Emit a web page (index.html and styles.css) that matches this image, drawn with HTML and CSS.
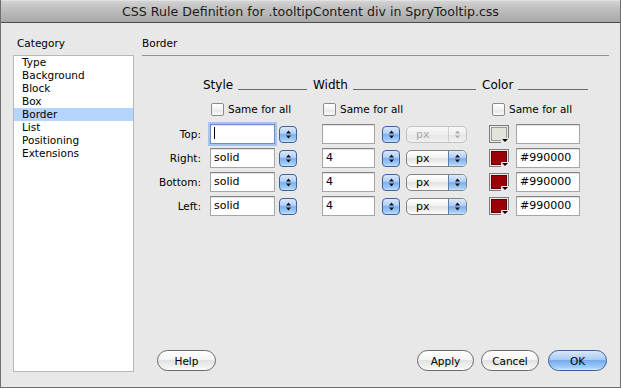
FILE: index.html
```html
<!DOCTYPE html>
<html lang="en">
<head>
  <meta charset="UTF-8">
  <title>CSS Rule Definition</title>
  <link rel="stylesheet" href="styles.css">
</head>
<body>
  <div class="window">
    <div class="titlebar">CSS Rule Definition for .tooltipContent div in SpryTooltip.css</div>

    <div class="content">
      <!-- Category list -->
      <div class="sidebar">
        <div class="side-title">Category</div>
        <ul class="category-list">
          <li>Type</li>
          <li>Background</li>
          <li>Block</li>
          <li>Box</li>
          <li class="selected">Border</li>
          <li>List</li>
          <li>Positioning</li>
          <li>Extensions</li>
        </ul>
      </div>

      <!-- Border panel -->
      <div class="panel">
        <div class="panel-title">Border</div>

        <div class="head-row">
          <div class="group group-style"><span>Style</span><i class="rule"></i></div>
          <div class="group group-width"><span>Width</span><i class="rule"></i></div>
          <div class="group group-color"><span>Color</span><i class="rule"></i></div>
        </div>

        <div class="same-row">
          <label class="same same-style"><span class="checkbox"></span>Same for all</label>
          <label class="same same-width"><span class="checkbox"></span>Same for all</label>
          <label class="same same-color"><span class="checkbox"></span>Same for all</label>
        </div>

        <div class="row">
          <span class="row-label">Top:</span>
          <span class="field field-style focused"><span class="caret"></span></span>
          <span class="stepper stepper-style"><svg width="5" height="9" viewBox="0 0 5 9"><path d="M2.5 0.5L5 3.5H0Z M0 5.5H5L2.5 8.5Z" fill="#111"/></svg></span>
          <span class="field field-width"></span>
          <span class="stepper stepper-width"><svg width="5" height="9" viewBox="0 0 5 9"><path d="M2.5 0.5L5 3.5H0Z M0 5.5H5L2.5 8.5Z" fill="#111"/></svg></span>
          <span class="select disabled"><span class="select-text">px</span><span class="select-arrow"><svg width="5" height="9" viewBox="0 0 5 9"><path d="M2.5 0.5L5 3.5H0Z M0 5.5H5L2.5 8.5Z" fill="#a8a8a8"/></svg></span></span>
          <span class="swatch swatch-empty"><span class="swatch-fill"></span><i class="swatch-tri"></i></span>
          <span class="field field-color"></span>
        </div>

        <div class="row">
          <span class="row-label">Right:</span>
          <span class="field field-style">solid</span>
          <span class="stepper stepper-style"><svg width="5" height="9" viewBox="0 0 5 9"><path d="M2.5 0.5L5 3.5H0Z M0 5.5H5L2.5 8.5Z" fill="#111"/></svg></span>
          <span class="field field-width">4</span>
          <span class="stepper stepper-width"><svg width="5" height="9" viewBox="0 0 5 9"><path d="M2.5 0.5L5 3.5H0Z M0 5.5H5L2.5 8.5Z" fill="#111"/></svg></span>
          <span class="select"><span class="select-text">px</span><span class="select-arrow"><svg width="5" height="9" viewBox="0 0 5 9"><path d="M2.5 0.5L5 3.5H0Z M0 5.5H5L2.5 8.5Z" fill="#111"/></svg></span></span>
          <span class="swatch swatch-red"><span class="swatch-fill"></span><i class="swatch-tri"></i></span>
          <span class="field field-color">#990000</span>
        </div>

        <div class="row">
          <span class="row-label">Bottom:</span>
          <span class="field field-style">solid</span>
          <span class="stepper stepper-style"><svg width="5" height="9" viewBox="0 0 5 9"><path d="M2.5 0.5L5 3.5H0Z M0 5.5H5L2.5 8.5Z" fill="#111"/></svg></span>
          <span class="field field-width">4</span>
          <span class="stepper stepper-width"><svg width="5" height="9" viewBox="0 0 5 9"><path d="M2.5 0.5L5 3.5H0Z M0 5.5H5L2.5 8.5Z" fill="#111"/></svg></span>
          <span class="select"><span class="select-text">px</span><span class="select-arrow"><svg width="5" height="9" viewBox="0 0 5 9"><path d="M2.5 0.5L5 3.5H0Z M0 5.5H5L2.5 8.5Z" fill="#111"/></svg></span></span>
          <span class="swatch swatch-red"><span class="swatch-fill"></span><i class="swatch-tri"></i></span>
          <span class="field field-color">#990000</span>
        </div>

        <div class="row">
          <span class="row-label">Left:</span>
          <span class="field field-style">solid</span>
          <span class="stepper stepper-style"><svg width="5" height="9" viewBox="0 0 5 9"><path d="M2.5 0.5L5 3.5H0Z M0 5.5H5L2.5 8.5Z" fill="#111"/></svg></span>
          <span class="field field-width">4</span>
          <span class="stepper stepper-width"><svg width="5" height="9" viewBox="0 0 5 9"><path d="M2.5 0.5L5 3.5H0Z M0 5.5H5L2.5 8.5Z" fill="#111"/></svg></span>
          <span class="select"><span class="select-text">px</span><span class="select-arrow"><svg width="5" height="9" viewBox="0 0 5 9"><path d="M2.5 0.5L5 3.5H0Z M0 5.5H5L2.5 8.5Z" fill="#111"/></svg></span></span>
          <span class="swatch swatch-red"><span class="swatch-fill"></span><i class="swatch-tri"></i></span>
          <span class="field field-color">#990000</span>
        </div>

        <!-- Dialog buttons -->
        <div class="footer">
          <button class="btn btn-help">Help</button>
          <span class="spacer"></span>
          <button class="btn btn-apply">Apply</button>
          <button class="btn btn-cancel">Cancel</button>
          <button class="btn btn-ok">OK</button>
        </div>
      </div>
    </div>
  </div>
</body>
</html>
```

FILE: styles.css
```css
body {
  margin: 0;
  font-family: "DejaVu Sans", sans-serif;
  font-size: 10.5px;
  color: #000;
  background: #e8e8e8;
}

.window {
  width: 621px;
  height: 388px;
  box-sizing: border-box;
  border: 1px solid #6f6f6f;
  border-top: 0;
  background: #e8e8e8;
  display: flex;
  flex-direction: column;
}

/* Title bar */
.titlebar {
  height: 23px;
  line-height: 21px;
  box-sizing: border-box;
  border-top: 1px solid #e2e2e2;
  border-bottom: 1px solid #4b4b4b;
  background: linear-gradient(#d3d3d3, #c2c2c2 30%, #a8a8a8);
  text-align: center;
  font-size: 12.6px;
  color: #1b1b1b;
}

.content {
  flex: 1;
  display: flex;
  padding: 14px 11px 15px 12px;
}

/* Category list */
.sidebar {
  width: 121px;
  display: flex;
  flex-direction: column;
}

.side-title {
  line-height: 13px;
  padding-left: 4px;
  margin-bottom: 5px;
}

.category-list {
  flex: 1;
  margin: 0;
  padding: 0;
  list-style: none;
  background: #fff;
  border: 1px solid #b8b8b8;
}

.category-list li {
  line-height: 13px;
  padding-left: 8px;
}

.category-list li.selected {
  background: #b5d5ff;
}

/* Border panel */
.panel {
  flex: 1;
  margin-left: 8px;
  display: flex;
  flex-direction: column;
}

.panel-title {
  line-height: 13px;
  padding-bottom: 5px;
  border-bottom: 1px solid #919191;
}

.head-row {
  display: flex;
  margin-top: 21px;
  padding-left: 61px;
  height: 16px;
  line-height: 16px;
  font-size: 12px;
}

.group {
  display: flex;
}

.group-style { width: 104px; margin-right: 6px; }
.group-width { width: 163px; margin-right: 6px; }
.group-color { width: 106px; }

.rule {
  flex: 1;
  height: 12px;
  margin-left: 5px;
  border-bottom: 1px solid #6a6a6a;
}

.same-row {
  display: flex;
  margin-top: 10px;
  padding-left: 69px;
  height: 13px;
  line-height: 13px;
}

.same {
  display: flex;
  align-items: center;
  gap: 4px;
}

.same-style { width: 112px; }
.same-width { width: 169px; }

.checkbox {
  width: 13px;
  height: 13px;
  box-sizing: border-box;
  border: 1px solid #8b8b8b;
  border-radius: 2px;
  background: linear-gradient(#fff, #f1f1f1 50%, #e6e6e6 51%, #fafafa);
}

/* Field rows */
.row {
  display: flex;
  align-items: center;
  height: 20px;
  margin-top: 4px;
}

.same-row + .row {
  margin-top: 8px;
}

.row-label {
  width: 59px;
  margin-right: 9px;
  text-align: right;
}

.field {
  height: 20px;
  box-sizing: border-box;
  background: #fff;
  border: 1px solid #a6a6a6;
  border-top-color: #828282;
  box-shadow: inset 0 1px 1px rgba(0, 0, 0, 0.12);
  font-size: 11px;
  line-height: 18px;
  padding-left: 3px;
}

.field-style { width: 65px; margin-right: 4px; }
.field-width { width: 53px; margin-right: 7px; }
.field-color { width: 64px; }

.field.focused {
  border-color: #6d8ec6;
  box-shadow: 0 0 0 2px #a9c4ec, inset 0 1px 1px rgba(0, 0, 0, 0.12);
}

.caret {
  display: inline-block;
  width: 1px;
  height: 12px;
  background: #000;
  vertical-align: -2px;
}

.stepper {
  width: 18px;
  height: 17px;
  box-sizing: border-box;
  border: 1px solid #40609a;
  border-radius: 4px;
  background: linear-gradient(#dce9fb, #aecdf6 45%, #7cb0f0 50%, #9fcbf7 85%, #cbe5fc);
  display: flex;
  align-items: center;
  justify-content: center;
}

.stepper-style { margin-right: 25px; }
.stepper-width { margin-right: 6px; }

.select {
  width: 61px;
  height: 17px;
  box-sizing: border-box;
  margin-right: 22px;
  border: 1px solid #848484;
  border-radius: 5px;
  background: linear-gradient(#fff, #f3f3f3 45%, #e2e2e2 50%, #f6f6f6 90%, #fff);
  display: flex;
  overflow: hidden;
}

.select-text {
  flex: 1;
  padding-left: 9px;
  font-size: 11px;
  line-height: 15px;
}

.select-arrow {
  width: 17px;
  border-left: 1px solid #5d7db3;
  background: linear-gradient(#dce9fb, #aecdf6 45%, #7cb0f0 50%, #9fcbf7 85%, #cbe5fc);
  display: flex;
  align-items: center;
  justify-content: center;
}

.select.disabled {
  border-color: #c3c3c3;
  color: #a8a8a8;
  background: linear-gradient(#f8f8f8, #eeeeee 50%, #e6e6e6 51%, #f0f0f0);
}

.select.disabled .select-arrow {
  border-left-color: #d0d0d0;
  background: transparent;
}

/* Colour swatch */
.swatch {
  position: relative;
  width: 20px;
  height: 18px;
  box-sizing: border-box;
  margin-right: 7px;
  border: 1px solid #7d7d7d;
  padding: 1px;
  background: #e9e9e9;
  display: flex;
}

.swatch-fill {
  flex: 1;
  border: 1px solid #8a8a8a;
}

.swatch-red .swatch-fill {
  background: #9b0008;
  border-color: #5e0005;
}

.swatch-empty .swatch-fill {
  background: #e3e3da;
  border-color: #9c9c9c;
}

/* little drop-down marker in the corner of the swatch */
.swatch-tri {
  position: absolute;
  right: -1px;
  bottom: -1px;
  width: 8px;
  height: 5px;
  background: #e9e9e9;
  border-top-left-radius: 1px;
}

.swatch-tri::after {
  content: "";
  position: absolute;
  left: 1px;
  top: 1px;
  border-left: 3px solid transparent;
  border-right: 3px solid transparent;
  border-top: 3px solid #000;
}

/* Buttons */
.footer {
  display: flex;
  align-items: center;
  margin-top: auto;
  margin-bottom: 1px;
  padding-left: 15px;
  padding-right: 2px;
}

.spacer {
  flex: 1;
}

.btn {
  height: 21px;
  box-sizing: border-box;
  border: 1px solid #6a6a6a;
  border-radius: 11px;
  background: linear-gradient(#fff, #f4f4f4 45%, #e2e2e2 50%, #f5f5f5 90%, #fff);
  font-family: "DejaVu Sans", sans-serif;
  font-size: 10.5px;
  color: #000;
  padding: 0;
}

.btn-help { width: 59px; }
.btn-apply { width: 57px; margin-right: 7px; }
.btn-cancel { width: 58px; margin-right: 9px; }

.btn-ok {
  width: 59px;
  border-color: #3d5f9c;
  background: linear-gradient(#d9e8fb, #a9cbf5 45%, #75aaee 50%, #9ccbf8 85%, #d0ecfd);
}
```
